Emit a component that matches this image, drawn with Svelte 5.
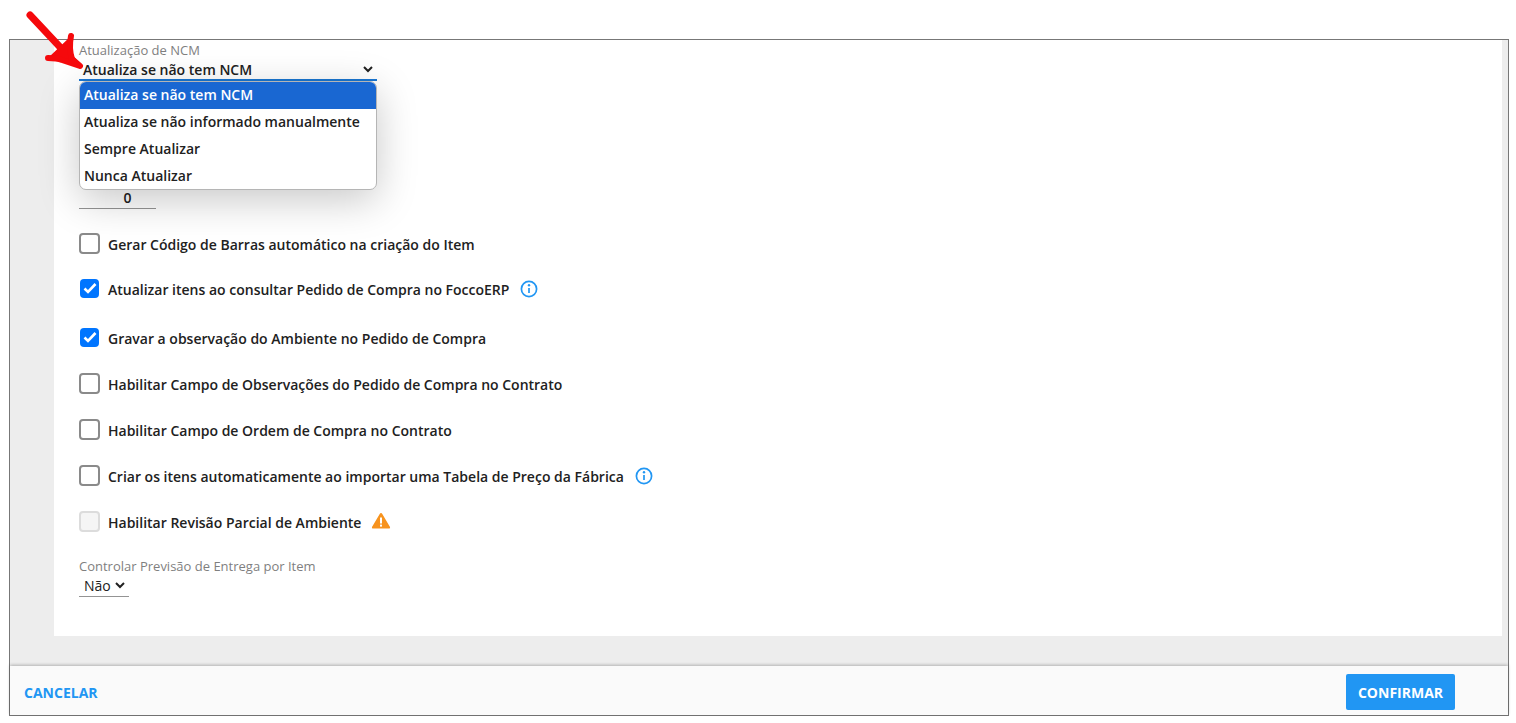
<script>
  const ncmOptions = [
    'Atualiza se não tem NCM',
    'Atualiza se não informado manualmente',
    'Sempre Atualizar',
    'Nunca Atualizar'
  ];

  const options = [
    { label: 'Gerar Código de Barras automático na criação do Item', checked: false, gap: 23 },
    { label: 'Atualizar itens ao consultar Pedido de Compra no FoccoERP', checked: true, info: true, gap: 27 },
    { label: 'Gravar a observação do Ambiente no Pedido de Compra', checked: true, gap: 24 },
    { label: 'Habilitar Campo de Observações do Pedido de Compra no Contrato', checked: false, gap: 24 },
    { label: 'Habilitar Campo de Ordem de Compra no Contrato', checked: false, gap: 24 },
    { label: 'Criar os itens automaticamente ao importar uma Tabela de Preço da Fábrica', checked: false, info: true, gap: 24 },
    { label: 'Habilitar Revisão Parcial de Ambiente', checked: false, disabled: true, warn: true, gap: 0 }
  ];
</script>

<svg class="arrow" width="90" height="80" viewBox="0 0 90 80">
  <path d="M30 15 L74 62" />
  <path class="head" d="M71 36 C69 46 70 53 72 59 L80 66 L62 60 C57 58 53 58 48 58" />
</svg>

<div class="frame">
  <main class="content">
    <section class="panel">
      <div class="ncm">
        <span class="label">Atualização de NCM</span>
        <div class="select open">
          <span>Atualiza se não tem NCM</span>
          <svg class="chev" width="10" height="7" viewBox="0 0 10 7"><path d="M1 1 L5 5 L9 1" /></svg>
        </div>
        <ul class="menu">
          {#each ncmOptions as opt, i}
            <li class:active={i === 0}>{opt}</li>
          {/each}
        </ul>
      </div>

      <div class="number">0</div>

      <div class="options">
        {#each options as o}
          <div class="row" style="margin-bottom: {o.gap}px">
            <span class="box" class:checked={o.checked} class:disabled={o.disabled}>
              {#if o.checked}
                <svg width="14" height="12" viewBox="0 0 14 12"><path d="M1.5 6.5 L5 10 L12.5 2" /></svg>
              {/if}
            </span>
            <span class="text">{o.label}</span>
            {#if o.info}
              <svg class="info" width="18" height="18" viewBox="0 0 18 18">
                <circle cx="9" cy="9" r="7.6" />
                <path d="M9 8 V13" />
                <circle class="dot" cx="9" cy="5.3" r="1.2" />
              </svg>
            {/if}
            {#if o.warn}
              <svg class="warn" width="20" height="18" viewBox="0 0 20 18">
                <path d="M10 1 Q10.8 1 11.3 1.9 L19 15 Q19.6 16.5 18 16.6 H2 Q0.4 16.5 1 15 L8.7 1.9 Q9.2 1 10 1 Z" />
                <rect x="9" y="5.5" width="2" height="6" fill="#fff" />
                <rect x="9" y="12.6" width="2" height="2" fill="#fff" />
              </svg>
            {/if}
          </div>
        {/each}
      </div>

      <div class="delivery">
        <span class="label">Controlar Previsão de Entrega por Item</span>
        <div class="select small">
          <span>Não</span>
          <svg class="chev" width="10" height="7" viewBox="0 0 10 7"><path d="M1 1 L5 5 L9 1" /></svg>
        </div>
      </div>
    </section>
  </main>

  <footer>
    <a href="#cancel" class="cancel">CANCELAR</a>
    <button class="confirm">CONFIRMAR</button>
  </footer>
</div>

<style>
  :global(body) {
    background: #fff;
    font-family: "Open Sans", sans-serif;
    color: #212121;
  }

  .arrow {
    position: absolute;
    top: 0;
    left: 0;
    z-index: 5;
    fill: none;
    stroke: #f5090c;
    stroke-width: 7;
    stroke-linecap: round;
    stroke-linejoin: round;
  }

  .arrow .head {
    fill: #f5090c;
    stroke-width: 6;
  }

  .frame {
    box-sizing: border-box;
    width: 1500px;
    height: 677px;
    margin: 39px 0 0 9px;
    border: 1px solid #777;
    display: flex;
    flex-direction: column;
    background: #ededed;
  }

  .content {
    flex: 1;
    padding: 0 6px 30px 44px;
    display: flex;
  }

  .panel {
    flex: 1;
    background: #fff;
    padding: 0 25px;
  }

  .label {
    display: block;
    font-size: 13px;
    line-height: 16px;
    color: #7f7f7f;
  }

  .ncm {
    position: relative;
    width: 298px;
    padding-top: 2px;
  }

  .select {
    display: flex;
    align-items: center;
    justify-content: space-between;
    box-sizing: border-box;
    height: 23px;
    padding: 0 4px;
    font-size: 14px;
    font-weight: 600;
    border-bottom: 1px solid #949494;
  }

  .select.open {
    border-bottom: 2px solid #1976d2;
    padding-top: 1px;
  }

  .select.small {
    width: 50px;
    height: 23px;
    padding: 1px 4px 0 5px;
    font-weight: 400;
  }

  .chev {
    fill: none;
    stroke: #212121;
    stroke-width: 2;
  }

  .menu {
    position: absolute;
    top: 41px;
    left: 0;
    z-index: 3;
    box-sizing: border-box;
    width: 298px;
    height: 109px;
    margin: 0;
    padding: 0;
    list-style: none;
    background: #fff;
    border: 1px solid #b5b5b5;
    border-radius: 7px;
    overflow: hidden;
    box-shadow: 0 10px 40px rgba(0, 0, 0, 0.22);
  }

  .menu li {
    height: 27px;
    line-height: 25px;
    padding-left: 4px;
    font-size: 14px;
    font-weight: 600;
    white-space: nowrap;
  }

  .menu li.active {
    background: #1967d2;
    color: #fff;
  }

  .number {
    box-sizing: border-box;
    width: 77px;
    height: 22px;
    margin-top: 106px;
    padding-left: 20px;
    line-height: 22px;
    font-size: 14px;
    font-weight: 600;
    text-align: center;
    border-bottom: 1px solid #949494;
  }

  .options {
    margin-top: 23px;
  }

  .row {
    display: flex;
    align-items: center;
    height: 22px;
    font-size: 14px;
    font-weight: 600;
    white-space: nowrap;
  }

  .text {
    padding-top: 2px;
  }

  .box {
    box-sizing: border-box;
    display: flex;
    align-items: center;
    justify-content: center;
    width: 21px;
    height: 21px;
    margin-right: 8px;
    border: 2px solid #8a8a8a;
    border-radius: 4px;
    background: #fff;
  }

  .box.checked {
    width: 19px;
    height: 19px;
    margin: 0 9px 0 1px;
    border: none;
    background: #0075ff;
  }

  .box.checked svg {
    fill: none;
    stroke: #fff;
    stroke-width: 2.6;
  }

  .box.disabled {
    border-color: #dcdcdc;
    background: #f5f5f5;
  }

  .info {
    margin: 2px 0 0 11px;
    fill: none;
    stroke: #2196f3;
    stroke-width: 1.7;
  }

  .info .dot {
    fill: #2196f3;
    stroke: none;
  }

  .warn {
    margin-left: 10px;
    fill: #f7931e;
  }

  .delivery {
    margin-top: 26px;
  }

  footer {
    box-sizing: border-box;
    height: 49px;
    display: flex;
    align-items: center;
    justify-content: space-between;
    padding: 3px 53px 0 14px;
    background: #fafafa;
    box-shadow: 0 -1px 3px rgba(0, 0, 0, 0.25);
  }

  .cancel {
    font-size: 14px;
    font-weight: 700;
    color: #2196f3;
    text-decoration: none;
  }

  .confirm {
    width: 109px;
    height: 36px;
    border: none;
    border-radius: 2px;
    background: #2196f3;
    color: #fff;
    font-family: inherit;
    font-size: 14px;
    font-weight: 700;
  }
</style>
